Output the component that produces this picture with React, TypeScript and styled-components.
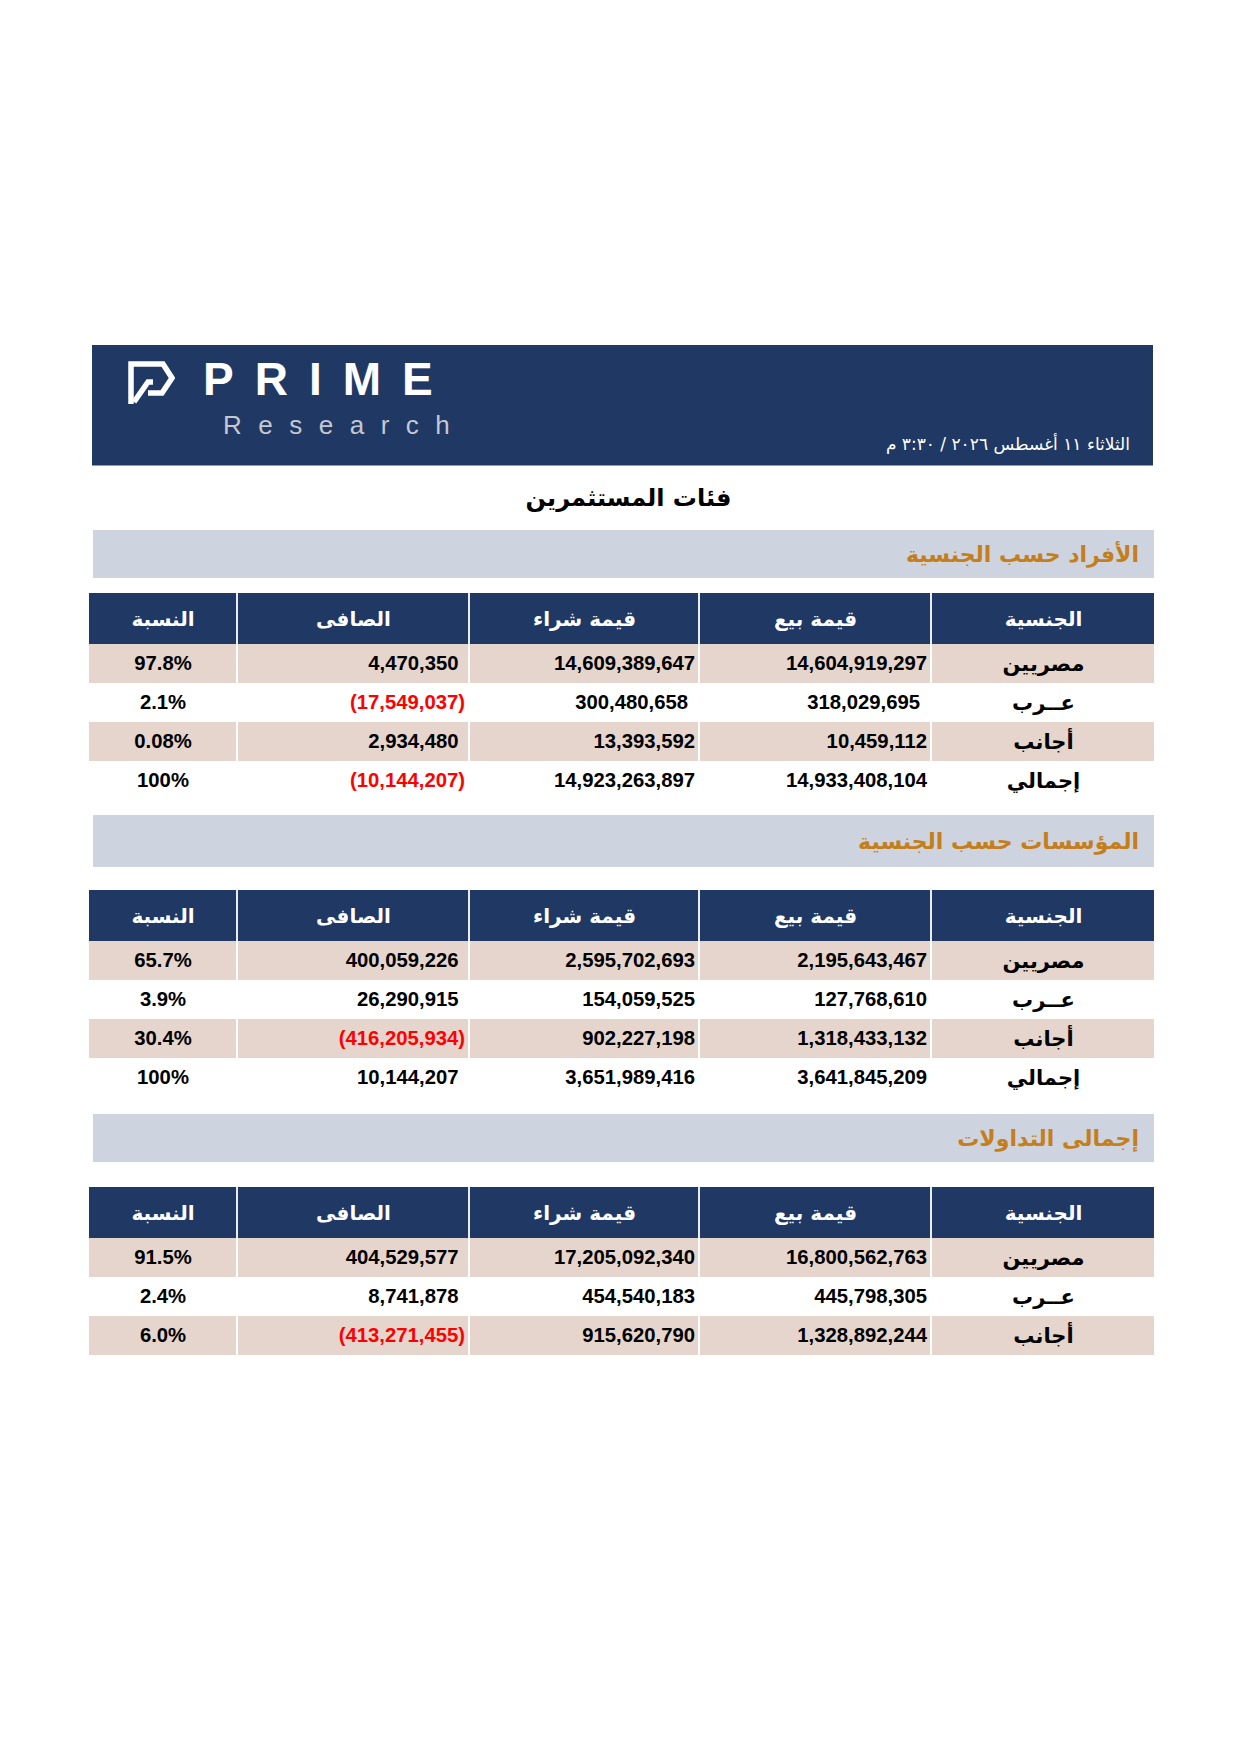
import React from "react";
import styled, { createGlobalStyle } from "styled-components";

const GlobalStyle = createGlobalStyle`
  html, body { margin: 0; padding: 0; background: #ffffff; }
  body { font-family: "Liberation Sans", "DejaVu Sans", Arial, sans-serif; }
  * { box-sizing: border-box; }
`;

const Page = styled.div`
  width: 1240px;
  min-height: 1754px;
  padding-top: 345px;
  background: #ffffff;
`;

const Sheet = styled.div`
  width: 1065px;
  margin-left: 89px;
`;

const Banner = styled.header`
  margin: 0 1px 0 3px;
  height: 121px;
  background: #203864;
  border-bottom: 1px solid #8a9cb8;
  display: flex;
  justify-content: space-between;
  align-items: flex-end;
`;

const LogoBlock = styled.div`
  align-self: flex-start;
  padding: 11px 0 0 35px;
  display: flex;
  flex-direction: column;
`;

const LogoRow = styled.div`
  display: flex;
  align-items: flex-start;
`;

const LogoIcon = styled.svg`
  margin-top: 5px;
  width: 48px;
  height: 43px;
  flex: none;
`;

const Prime = styled.div`
  margin-left: 28px;
  font-family: "Liberation Sans", Arial, sans-serif;
  font-size: 46px;
  line-height: 1;
  font-weight: 700;
  letter-spacing: 21px;
  color: #ffffff;
`;

const Research = styled.div`
  margin: 8px 0 0 96px;
  font-family: "Liberation Sans", Arial, sans-serif;
  font-size: 26px;
  line-height: 1;
  letter-spacing: 16.5px;
  color: #c4c8d1;
`;

const DateText = styled.div`
  direction: rtl;
  padding: 0 23px 12px 0;
  font-family: "DejaVu Sans", "Liberation Sans", sans-serif;
  font-size: 17px;
  line-height: 1;
  color: #ffffff;
`;

const Title = styled.h1`
  margin: 0;
  height: 64px;
  display: flex;
  align-items: center;
  justify-content: center;
  padding-left: 14px;
  direction: rtl;
  font-family: "DejaVu Sans", sans-serif;
  font-size: 24px;
  font-weight: 700;
  color: #000000;
`;

const Band = styled.div<{ $h: number; $gap: number }>`
  margin: 0 0 ${(p) => p.$gap}px 4px;
  height: ${(p) => p.$h}px;
  background: #cdd3df;
  direction: rtl;
  display: flex;
  align-items: center;
  padding-right: 15px;
  font-family: "DejaVu Sans", sans-serif;
  font-size: 22px;
  font-weight: 700;
  color: #c47e1b;
`;

const Table = styled.div<{ $gap: number }>`
  direction: rtl;
  margin-bottom: ${(p) => p.$gap}px;
`;

const Row = styled.div<{ $kind: "head" | "shade" | "plain" }>`
  display: grid;
  grid-template-columns: 224px 232px 230px 232px 147px;
  height: ${(p) => (p.$kind === "head" ? 51 : 39)}px;
  background: #ffffff;
`;

const Cell = styled.div<{ $kind: "head" | "shade" | "plain"; $first?: boolean; $last?: boolean }>`
  display: flex;
  align-items: center;
  justify-content: ${(p) => (p.$kind === "head" || p.$first || p.$last ? "center" : "flex-end")};
  background: ${(p) => (p.$kind === "head" ? "#203864" : p.$kind === "shade" ? "#e6d5cd" : "#ffffff")};
  border-left: ${(p) => (p.$last ? "none" : `2px solid ${p.$kind === "head" ? "#e9ecf2" : "#ffffff"}`)};
  padding: 0 3px 0 4px;
  font-weight: 700;
  color: ${(p) => (p.$kind === "head" ? "#ffffff" : "#000000")};
  font-family: ${(p) => (p.$kind === "head" || p.$first ? '"DejaVu Sans", sans-serif' : '"Liberation Sans", Arial, sans-serif')};
  font-size: ${(p) => (p.$kind === "head" ? "20px" : p.$first ? "21px" : "20.3px")};
  direction: ${(p) => (p.$kind === "head" || p.$first ? "rtl" : "ltr")};
  white-space: nowrap;
`;

const Num = styled.span<{ $neg?: boolean; $pad: number }>`
  color: ${(p) => (p.$neg ? "#ff0000" : "inherit")};
  padding-right: ${(p) => p.$pad}px;
`;

type Line = {
  name: string;
  sell: string;
  buy: string;
  net: string;
  pct: string;
  sellPad?: number;
  buyPad?: number;
};

const headers = ["الجنسية", "قيمة بيع", "قيمة شراء", "الصافى", "النسبة"];

function DataTable({ rows, gap }: { rows: Line[]; gap: number }) {
  return (
    <Table $gap={gap}>
      <Row $kind="head">
        {headers.map((h, i) => (
          <Cell key={h} $kind="head" $last={i === headers.length - 1}>
            {h}
          </Cell>
        ))}
      </Row>
      {rows.map((r, i) => {
        const kind = i % 2 === 0 ? "shade" : "plain";
        const neg = r.net.startsWith("(");
        return (
          <Row key={r.name + i} $kind={kind}>
            <Cell $kind={kind} $first>
              {r.name}
            </Cell>
            <Cell $kind={kind}>
              <Num $pad={r.sellPad ?? 0}>{r.sell}</Num>
            </Cell>
            <Cell $kind={kind}>
              <Num $pad={r.buyPad ?? 0}>{r.buy}</Num>
            </Cell>
            <Cell $kind={kind}>
              <Num $neg={neg} $pad={neg ? 0 : 6.5}>
                {r.net}
              </Num>
            </Cell>
            <Cell $kind={kind} $last>
              {r.pct}
            </Cell>
          </Row>
        );
      })}
    </Table>
  );
}

const individuals: Line[] = [
  { name: "مصريين", sell: "14,604,919,297", buy: "14,609,389,647", net: "4,470,350", pct: "97.8%" },
  { name: "عــرب", sell: "318,029,695", buy: "300,480,658", net: "(17,549,037)", pct: "2.1%", sellPad: 7, buyPad: 7 },
  { name: "أجانب", sell: "10,459,112", buy: "13,393,592", net: "2,934,480", pct: "0.08%" },
  { name: "إجمالي", sell: "14,933,408,104", buy: "14,923,263,897", net: "(10,144,207)", pct: "100%" },
];

const institutions: Line[] = [
  { name: "مصريين", sell: "2,195,643,467", buy: "2,595,702,693", net: "400,059,226", pct: "65.7%" },
  { name: "عــرب", sell: "127,768,610", buy: "154,059,525", net: "26,290,915", pct: "3.9%" },
  { name: "أجانب", sell: "1,318,433,132", buy: "902,227,198", net: "(416,205,934)", pct: "30.4%" },
  { name: "إجمالي", sell: "3,641,845,209", buy: "3,651,989,416", net: "10,144,207", pct: "100%" },
];

const totals: Line[] = [
  { name: "مصريين", sell: "16,800,562,763", buy: "17,205,092,340", net: "404,529,577", pct: "91.5%" },
  { name: "عــرب", sell: "445,798,305", buy: "454,540,183", net: "8,741,878", pct: "2.4%" },
  { name: "أجانب", sell: "1,328,892,244", buy: "915,620,790", net: "(413,271,455)", pct: "6.0%" },
];

function Logo() {
  return (
    <LogoIcon viewBox="0 0 48 43" fill="none" stroke="#ffffff" strokeWidth="5.5" strokeLinejoin="miter">
      <path d="M4 43 V3 H36 L45 17 L35 32 H21" />
      <path d="M7 41 L21 21 H26" />
    </LogoIcon>
  );
}

export default function App() {
  return (
    <>
      <GlobalStyle />
      <Page>
        <Sheet>
          <Banner>
            <LogoBlock>
              <LogoRow>
                <Logo />
                <Prime>PRIME</Prime>
              </LogoRow>
              <Research>Research</Research>
            </LogoBlock>
            <DateText>الثلاثاء ١١ أغسطس ٢٠٢٦ / ٣:٣٠ م</DateText>
          </Banner>
          <Title>فئات المستثمرين</Title>
          <Band $h={48} $gap={15}>الأفراد حسب الجنسية</Band>
          <DataTable rows={individuals} gap={15} />
          <Band $h={52} $gap={23}>المؤسسات حسب الجنسية</Band>
          <DataTable rows={institutions} gap={17} />
          <Band $h={48} $gap={25}>إجمالى التداولات</Band>
          <DataTable rows={totals} gap={0} />
        </Sheet>
      </Page>
    </>
  );
}
